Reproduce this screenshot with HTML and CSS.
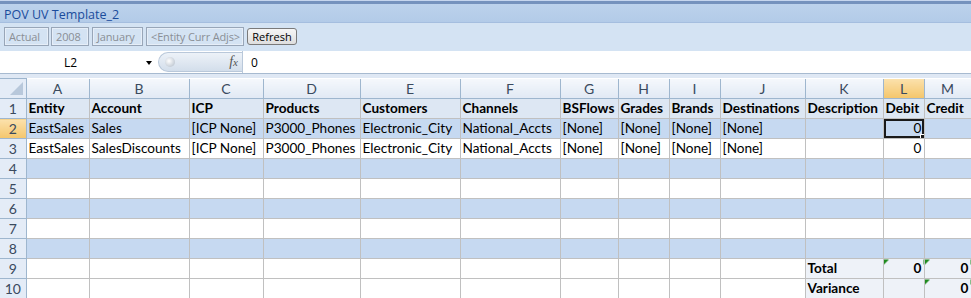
FILE: index.html
```html
<!DOCTYPE html>
<html>
<head>
<meta charset="utf-8">
<link rel="stylesheet" href="styles.css">
</head>
<body>
<div class="app">
  <div class="titlebar"><span class="title">POV UV Template_2</span></div>
  <div class="toolbar">
    <span class="pov pov-a">Actual</span>
    <span class="pov pov-b">2008</span>
    <span class="pov pov-c">January</span>
    <span class="pov pov-d">&lt;Entity Curr Adjs&gt;</span>
    <button class="refresh">Refresh</button>
  </div>
  <div class="formulabar">
    <div class="namebox"><span class="cellref">L2</span><span class="drop"></span></div>
    <div class="pill"><span class="knob"></span><span class="fx">f<span class="fxx">x</span></span></div>
    <div class="formula">0</div>
  </div>
  <div class="band"></div>
  <table class="grid">
    <colgroup>
      <col class="c-rh"><col class="c-a"><col class="c-b"><col class="c-c"><col class="c-d"><col class="c-e"><col class="c-f"><col class="c-g"><col class="c-h"><col class="c-i"><col class="c-j"><col class="c-k"><col class="c-l"><col class="c-m">
    </colgroup>
    <tr class="hdr">
      <th class="corner"><span class="tri"></span></th>
      <th>A</th><th>B</th><th>C</th><th>D</th><th>E</th><th>F</th><th>G</th><th>H</th><th>I</th><th>J</th><th>K</th><th class="sel">L</th><th>M</th>
    </tr>
    <tr class="r1">
      <th>1</th>
      <td class="b">Entity</td><td class="b">Account</td><td class="b">ICP</td><td class="b">Products</td><td class="b">Customers</td><td class="b">Channels</td><td class="b">BSFlows</td><td class="b">Grades</td><td class="b">Brands</td><td class="b">Destinations</td><td class="b">Description</td><td class="b">Debit</td><td class="b">Credit</td>
    </tr>
    <tr class="band2">
      <th class="sel">2</th>
      <td>EastSales</td><td>Sales</td><td>[ICP None]</td><td>P3000_Phones</td><td>Electronic_City</td><td>National_Accts</td><td>[None]</td><td>[None]</td><td>[None]</td><td>[None]</td><td></td><td class="num dl active">0<span class="handle"></span></td><td></td>
    </tr>
    <tr>
      <th>3</th>
      <td>EastSales</td><td>SalesDiscounts</td><td>[ICP None]</td><td>P3000_Phones</td><td>Electronic_City</td><td>National_Accts</td><td>[None]</td><td>[None]</td><td>[None]</td><td>[None]</td><td></td><td class="num dl">0</td><td></td>
    </tr>
    <tr class="band2"><th>4</th><td></td><td></td><td></td><td></td><td></td><td></td><td></td><td></td><td></td><td></td><td></td><td class="dl"></td><td></td></tr>
    <tr><th>5</th><td></td><td></td><td></td><td></td><td></td><td></td><td></td><td></td><td></td><td></td><td></td><td class="dl"></td><td></td></tr>
    <tr class="band2"><th>6</th><td></td><td></td><td></td><td></td><td></td><td></td><td></td><td></td><td></td><td></td><td></td><td class="dl"></td><td></td></tr>
    <tr><th>7</th><td></td><td></td><td></td><td></td><td></td><td></td><td></td><td></td><td></td><td></td><td></td><td class="dl"></td><td></td></tr>
    <tr class="band2"><th>8</th><td></td><td></td><td></td><td></td><td></td><td></td><td></td><td></td><td></td><td></td><td></td><td class="dl"></td><td></td></tr>
    <tr>
      <th>9</th><td></td><td></td><td></td><td></td><td></td><td></td><td></td><td></td><td></td><td></td>
      <td class="b tot">Total</td><td class="b tot num dl flag">0</td><td class="b tot num flag">0</td>
    </tr>
    <tr>
      <th>10</th><td></td><td></td><td></td><td></td><td></td><td></td><td></td><td></td><td></td><td></td>
      <td class="b tot">Variance</td><td class="tot dl"></td><td class="b tot num flag">0</td>
    </tr>
  </table>
</div>
</body>
</html>
```

FILE: styles.css
```css
html, body {
  margin: 0;
  padding: 0;
  background: #ffffff;
}
.app {
  width: 971px;
  height: 298px;
  overflow: hidden;
  font-family: "Lato", "Liberation Sans", sans-serif;
}
.titlebar {
  height: 17px;
  border-top: 1px solid #c6d6ee;
  box-shadow: inset 0 3px 0 #7592bd;
  padding-top: 4px;
  background: linear-gradient(#bdd3ec, #b3cbe8);
  border-bottom: 1px solid #a5bedf;
  display: flex;
  align-items: center;
}
.title {
  font-family: "Open Sans", "DejaVu Sans", sans-serif;
  font-size: 12.5px;
  color: #1a4c9c;
  padding-left: 4px;
  padding-top: 2px;
}
.toolbar {
  height: 28px;
  background: #d4e3f3;
  display: flex;
  align-items: center;
  padding-left: 4px;
  box-sizing: border-box;
  padding-bottom: 1px;
}
.pov {
  box-sizing: border-box;
  height: 19px;
  border: 1px solid #98a6b8;
  box-shadow: inset 0 0 0 1px #e6eef8;
  font-family: "Open Sans", "DejaVu Sans", sans-serif;
  font-size: 11px;
  letter-spacing: -0.15px;
  color: #8a8f96;
  padding: 0 0 0 4px;
  display: flex;
  align-items: center;
  white-space: nowrap;
  overflow: hidden;
}
.pov-a { width: 45px; }
.pov-b { width: 38px; margin-left: 2px; }
.pov-c { width: 51px; margin-left: 3px; }
.pov-d { width: 98px; margin-left: 3px; padding-left: 4px; }
.refresh {
  margin-left: 3px;
  height: 17px;
  width: 50px;
  padding: 0;
  border: 1px solid #7a7a7a;
  border-radius: 3px;
  background: linear-gradient(#f6f6f6, #dedede);
  font-family: "Open Sans", "DejaVu Sans", sans-serif;
  font-size: 11px;
  color: #000;
}
.formulabar {
  height: 22px;
  background: #ffffff;
  display: flex;
  align-items: stretch;
  border-bottom: 1px solid #a7bad0;
}
.namebox {
  width: 158px;
  position: relative;
  display: flex;
  align-items: center;
}
.cellref {
  font-family: "Open Sans", "DejaVu Sans", sans-serif;
  font-size: 12px;
  color: #000;
  padding-left: 64px;
}
.drop {
  position: absolute;
  left: 146px;
  top: 10px;
  width: 0;
  height: 0;
  border-left: 3.5px solid transparent;
  border-right: 3.5px solid transparent;
  border-top: 4px solid #000;
}
.pill {
  width: 84px;
  margin: 1px 0;
  border-radius: 11px 0 0 11px;
  background: linear-gradient(#edf2f8, #d3deeb);
  border: 1px solid #b9c8da;
  border-right: none;
  box-sizing: border-box;
  position: relative;
}
.knob {
  position: absolute;
  left: 6px;
  top: 4px;
  width: 10px;
  height: 10px;
  border-radius: 50%;
  background: radial-gradient(circle at 40% 40%, #ffffff, #aeb9c6);
}
.fx {
  position: absolute;
  right: 4px;
  top: 1px;
  font-family: "Liberation Serif", serif;
  font-style: italic;
  font-size: 14px;
  color: #555;
}
.fxx { font-size: 11px; }
.formula {
  flex: 1;
  border-left: 1px solid #b9c8da;
  font-family: "Open Sans", "DejaVu Sans", sans-serif;
  font-size: 12px;
  padding-left: 8px;
  display: flex;
  align-items: center;
}
.band {
  height: 4px;
  background: #dfe8f4;
}
.c-rh { width: 26px; }
.c-a { width: 63px; }
.c-b { width: 100px; }
.c-c { width: 74px; }
.c-d { width: 97px; }
.c-e { width: 100px; }
.c-f { width: 100px; }
.c-g { width: 58px; }
.c-h { width: 51px; }
.c-i { width: 51px; }
.c-j { width: 85px; }
.c-k { width: 78px; }
.c-l { width: 41px; }
.c-m { width: 47px; }
.grid {
  table-layout: fixed;
  border-collapse: collapse;
  width: 971px;
  font-size: 13.6px;
  color: #000;
}
.grid th, .grid td {
  height: 19px;
  padding: 0 2px;
  border: 1px solid #c0c0c0;
  white-space: nowrap;
  overflow: hidden;
  line-height: 19px;
}
.grid td { text-align: left; }
.grid tr.hdr th {
  font-weight: normal;
  color: #3a4a5e;
  background: linear-gradient(#f5f8fc, #e1e9f4);
  border: 1px solid #9eb6ce;
  border-top: none;
  text-align: center;
  font-size: 14px;
}
.grid tr.hdr th.sel {
  background: linear-gradient(#fbe1ac, #f4c66c);
}
.grid tr th:first-child {
  font-weight: normal;
  color: #3a4a5e;
  background: #e4ecf7;
  border: 1px solid #9eb6ce;
  border-left: none;
  text-align: center;
  padding: 0;
  font-size: 14px;
}
.grid tr th.sel:first-child {
  background: linear-gradient(#fbe1ac, #f4c66c);
}
.grid tr.hdr th.corner {
  background: #e4ecf7;
  position: relative;
}
.tri {
  position: absolute;
  right: 3px;
  bottom: 3px;
  width: 0;
  height: 0;
  border-left: 13px solid transparent;
  border-bottom: 13px solid #b8c8db;
}
.r1 td { background: #dde7f3; }
.band2 td { background: #c6d9f1; }
.b { font-weight: bold; }
.num { text-align: right !important; }
.grid td.dl { border-left: 1px solid #2a2a2a; }
.grid td.tot { background: #eef2f8; }
.active {
  position: relative;
  box-shadow: inset 0 0 0 2px #1a1a1a;
}
.handle {
  position: absolute;
  right: -1px;
  bottom: -1px;
  width: 5px;
  height: 5px;
  background: #1a1a1a;
  border: 1px solid #fff;
  box-sizing: border-box;
}
.flag {
  position: relative;
  background-image: linear-gradient(135deg, #1e8a1e 0, #1e8a1e 4px, transparent 4px) !important;
  background-color: #eef2f8;
  background-repeat: no-repeat;
}
```
